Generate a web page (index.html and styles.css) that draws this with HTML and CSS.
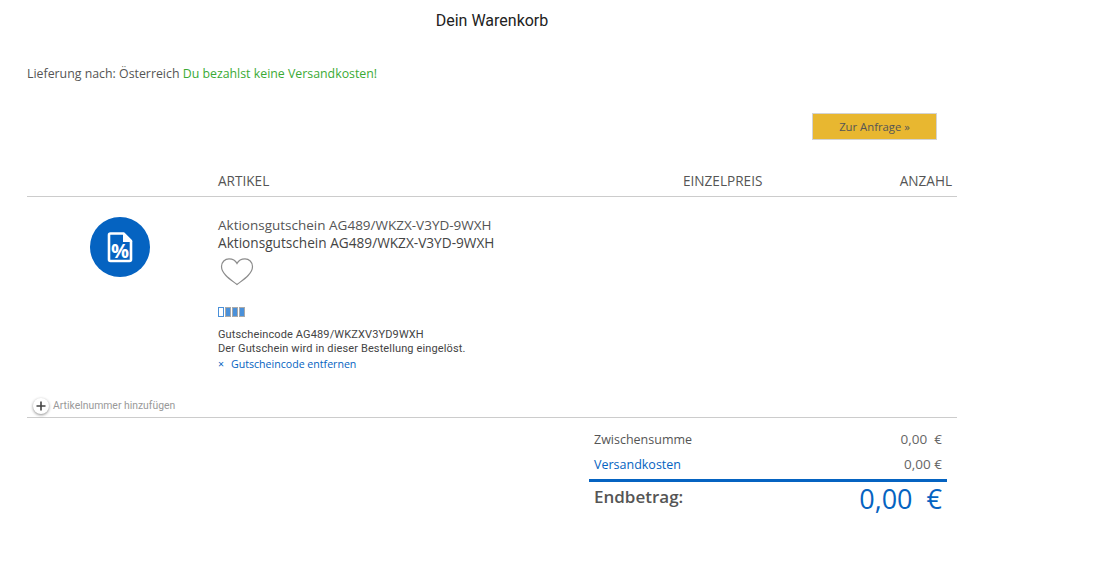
FILE: index.html
```html
<!DOCTYPE html>
<html lang="de">
<head>
<meta charset="utf-8">
<title>Dein Warenkorb</title>
<link rel="stylesheet" href="styles.css">
</head>
<body>
<main class="page">
  <h1 class="title">Dein Warenkorb</h1>
  <p class="delivery">Lieferung nach: Österreich <span class="free">Du bezahlst keine Versandkosten!</span></p>
  <div class="actions"><a class="request" href="#">Zur Anfrage »</a></div>
  <div class="thead">
    <div class="col-article">ARTIKEL</div>
    <div class="col-price">EINZELPREIS</div>
    <div class="col-qty">ANZAHL</div>
  </div>
  <div class="item">
    <div class="item-icon">
      <svg class="badge" viewBox="0 0 60 60" width="60" height="60" aria-hidden="true">
        <circle cx="30" cy="30" r="30" fill="#0563c1"/>
        <path d="M20.500 16.500h13l7.500 7.500v18.500a1.500 1.500 0 0 1-1.500 1.500h-19a1.500 1.500 0 0 1-1.500-1.500v-24.500a1.500 1.500 0 0 1 1.500-1.500z" fill="none" stroke="#fff" stroke-width="2.600" stroke-linejoin="round"/>
        <path d="M33 15.500v9.500h9.500z" fill="#fff"/>
        <text class="percent" x="30" y="41" text-anchor="middle">%</text>
      </svg>
    </div>
    <div class="item-body">
      <div class="name">Aktionsgutschein AG489/WKZX-V3YD-9WXH</div>
      <div class="name name-strong">Aktionsgutschein AG489/WKZX-V3YD-9WXH</div>
      <svg class="heart" viewBox="0 0 34 30" width="34" height="30" aria-hidden="true">
        <path d="M17 27.500C11 22.800 1.500 17 1.500 9.500 1.500 5 5 1.800 9 1.800c3.500 0 6.500 1.700 8 4.700 1.500-3 4.500-4.700 8-4.700 4 0 7.500 3.200 7.500 7.700 0 7.500-9.500 13.300-15.500 18z" fill="none" stroke="#8c8c8c" stroke-width="1.200"/>
      </svg>
      <div class="stock">
        <span class="bar bar-empty"></span><span class="bar"></span><span class="bar"></span><span class="bar"></span>
      </div>
      <div class="code">Gutscheincode AG489/WKZXV3YD9WXH</div>
      <div class="code">Der Gutschein wird in dieser Bestellung eingelöst.</div>
      <a class="remove" href="#"><span class="remove-x">×</span>Gutscheincode entfernen</a>
    </div>
  </div>
  <div class="add-row">
    <span class="add-btn"><svg viewBox="0 0 10 10" width="10" height="10" aria-hidden="true"><path d="M5 .5v9M.5 5h9" stroke="#444" stroke-width="1.600"/></svg></span>
    <span class="add-label">Artikelnummer hinzufügen</span>
  </div>
  <div class="totals">
    <div class="total-row first"><span>Zwischensumme</span><span class="amount">0,00&nbsp; €</span></div>
    <div class="total-row second"><a href="#">Versandkosten</a><span class="amount">0,00 €</span></div>
    <div class="total-row grand"><span class="grand-label">Endbetrag:</span><span class="grand-amount">0,00&nbsp; €</span></div>
  </div>
</main>
</body>
</html>
```
FILE: styles.css
```css
* { box-sizing: border-box; }
html, body { margin: 0; padding: 0; background: #fff; }
body { font-family: "Open Sans", "Liberation Sans", sans-serif; color: #555; overflow: hidden; }
a { text-decoration: none; color: #0563c1; }
.page { width: 984px; padding: 0 27px; height: 574px; }
.title { margin: 0; padding-top: 11px; height: 62px; font: 400 16px/20px Roboto, sans-serif; color: #222; text-align: center; }
.delivery { margin: 0; height: 51px; padding-top: 2px; font-size: 12.350px; line-height: 20px; color: #555; }
.free { color: #3aaa35; }
.actions { display: flex; justify-content: flex-end; padding-right: 20px; height: 59px; }
.request { display: block; width: 125px; height: 27px; background: #e8b730; border: 1px solid #d3d3d3; color: #555; font-size: 11.300px; line-height: 25px; text-align: center; }
.thead { display: flex; height: 25px; border-bottom: 1px solid #ccc; font-size: 13.600px; line-height: 18px; color: #555; }
.col-article { margin-left: 191px; width: 465px; }
.col-price { width: 169px; }
.col-qty { width: 100px; text-align: right; }
.item { display: flex; height: 199px; padding-top: 19px; }
.item-icon { width: 191px; padding: 1px 0 0 63px; }
.badge { display: block; }
.percent { font: 700 20px "Open Sans", sans-serif; fill: #fff; }
.item-body { flex: 1; }
.name { font-size: 13.500px; line-height: 18px; color: #555; }
.name-strong { font-size: 13.650px; color: #444; }
.heart { display: block; margin: 5px 0 0 2px; }
.stock { display: flex; gap: 1px; margin-top: 20px; height: 10px; }
.bar { width: 6px; height: 10px; background: #4a90d9; border: 1px solid #a9a9a9; }
.bar-empty { background: #fff; border-color: #4a90d9; }
.code { font: 400 11px/14px Roboto, sans-serif; letter-spacing: .13px; color: #444; }
.stock + .code { margin-top: 11px; }
.remove { display: block; margin-top: 1px; font: 400 10.600px/15px "Open Sans", sans-serif; }
.remove-x { display: inline-block; width: 13px; }
.add-row { display: flex; align-items: center; height: 22px; padding: 0 0 2px 6px; border-bottom: 1px solid #ccc; }
.add-btn { display: flex; align-items: center; justify-content: center; width: 16px; height: 16px; border-radius: 50%; background: #fff; box-shadow: 0 1px 3px rgba(0,0,0,.45); }
.add-label { margin-left: 4px; font: 400 10.400px/14px Roboto, sans-serif; color: #999; }
.totals { margin-left: 562px; width: 358px; }
.total-row { display: flex; justify-content: space-between; padding: 0 5px; font-size: 12.500px; line-height: 18px; }
.first { margin-top: 13px; height: 25px; }
.second { height: 24px; }
.amount { color: #666; font-size: 13.500px; line-height: 17px; }
.grand { margin-top: -1px; border-top: 3px solid #0563c1; align-items: flex-start; }
.grand-label { font-size: 17px; font-weight: 600; line-height: 30px; }
.grand-amount { font-size: 27px; font-weight: 500; line-height: 34px; color: #0563c1; }
```
